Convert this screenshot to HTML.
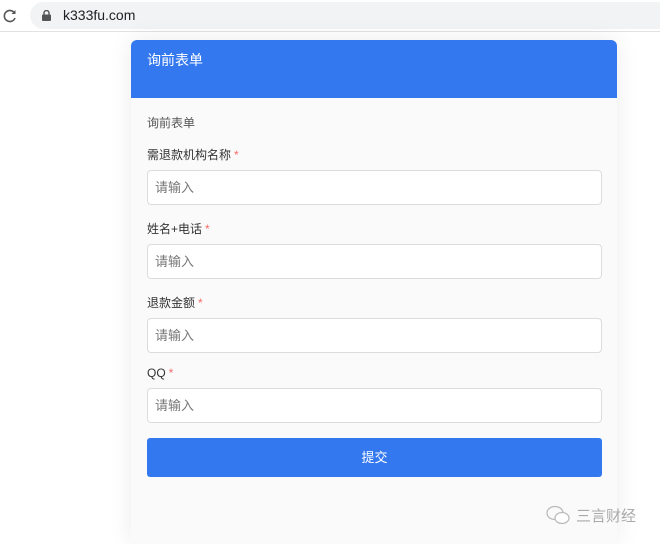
<!DOCTYPE html>
<html><head><meta charset="utf-8"><style>
*{box-sizing:border-box;margin:0;padding:0}
html,body{width:660px;height:544px;overflow:hidden}
body{background:#fff;font-family:"Liberation Sans","Noto Sans CJK SC",sans-serif;position:relative}
.bar{position:absolute;left:0;top:0;width:660px;height:32px;background:#fff;border-bottom:1px solid #e2e2e2}
.url{position:absolute;left:30px;top:2px;width:640px;height:27px;background:#f1f3f4;border-radius:14px}
.url span{position:absolute;left:33px;top:5px;font-size:14px;color:#202124}
.card{position:absolute;left:131px;top:40px;width:486px;height:504px;background:#fafafa;border-radius:6px 6px 0 0;box-shadow:0 0 24px rgba(0,0,0,.08);overflow:hidden}
.hd{height:58px;background:#3478f0;color:#fff;font-size:14px;padding:10px 0 0 16px}
.lbl{position:absolute;left:16px;font-size:12px;color:#333}
.lbl i{color:#f56c6c;font-style:normal;margin-left:3px}
.in{position:absolute;left:16px;width:455px;height:35px;background:#fff;border:1px solid #dcdcdc;border-radius:4px;font-size:13px;color:#777;padding:6px 0 0 7px}
.btn{position:absolute;left:16px;top:398px;width:455px;height:39px;background:#3478f0;border-radius:3px;color:#fff;font-size:13px;text-align:center;line-height:39px}
.wm{position:absolute;left:545px;top:505px;font-size:15px;color:#aaa}
</style></head><body>
<div class="bar">
<svg style="position:absolute;left:3px;top:9px" width="14" height="14" viewBox="0 0 14 14"><path d="M11.5 4A5.5 5.5 0 1 0 12 9" fill="none" stroke="#555" stroke-width="1.6"/><path d="M12.5 1v4h-4z" fill="#555"/></svg>
<div class="url"><svg style="position:absolute;left:12px;top:8px" width="9" height="11" viewBox="0 0 9 11"><rect x="0" y="4.5" width="9" height="6.5" rx="1" fill="#555"/><path d="M2 5V3a2.5 2.5 0 0 1 5 0v2" fill="none" stroke="#555" stroke-width="1.4"/></svg><span>k333fu.com</span></div>
</div>
<div class="card">
<div class="hd">询前表单</div>
<div class="lbl" style="top:74px;color:#555">询前表单</div>
<div class="lbl" style="top:106px">需退款机构名称<i>*</i></div>
<div class="in" style="top:130px">请输入</div>
<div class="lbl" style="top:180px">姓名+电话<i>*</i></div>
<div class="in" style="top:204px">请输入</div>
<div class="lbl" style="top:254px">退款金额<i>*</i></div>
<div class="in" style="top:278px">请输入</div>
<div class="lbl" style="top:326px">QQ<i>*</i></div>
<div class="in" style="top:348px">请输入</div>
<div class="btn">提交</div>
</div>
<svg style="position:absolute;left:545px;top:505px" width="26" height="20" viewBox="0 0 26 20"><ellipse cx="10" cy="8" rx="8" ry="6.5" fill="none" stroke="#bbb" stroke-width="1.3"/><ellipse cx="17" cy="13" rx="7" ry="5.5" fill="#fff" stroke="#bbb" stroke-width="1.3"/></svg>
<div class="wm" style="left:576px">三言财经</div>
</body></html>
